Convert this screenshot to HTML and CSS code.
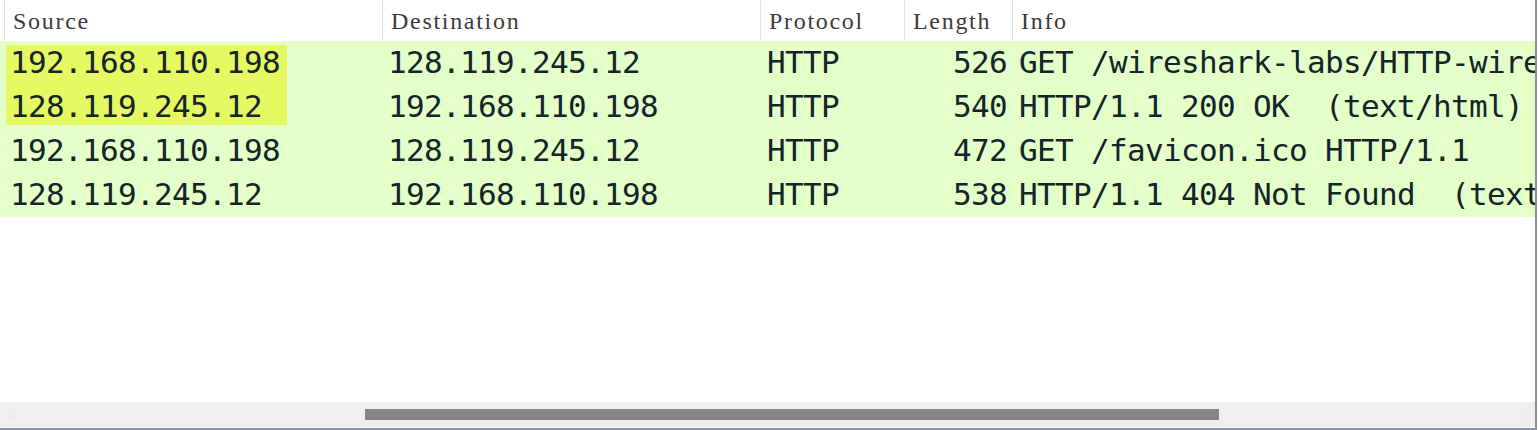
FILE: index.html
```html
<!DOCTYPE html>
<html>
<head>
<meta charset="utf-8">
<link rel="stylesheet" href="styles.css">
</head>
<body>
<div class="frame">
  <div class="grid head">
    <div class="hc first"></div>
    <div class="hc">Source</div>
    <div class="hc">Destination</div>
    <div class="hc">Protocol</div>
    <div class="hc">Length</div>
    <div class="hc">Info</div>
  </div>
  <div class="rows">
    <div class="grid row">
      <div class="c first"></div>
      <div class="c src sel-top">192.168.110.198</div>
      <div class="c dst">128.119.245.12</div>
      <div class="c proto">HTTP</div>
      <div class="c len">526</div>
      <div class="c info">GET /wireshark-labs/HTTP-wireshark-file1.html HTTP/1.1</div>
    </div>
    <div class="grid row">
      <div class="c first"></div>
      <div class="c src sel-bottom">128.119.245.12</div>
      <div class="c dst">192.168.110.198</div>
      <div class="c proto">HTTP</div>
      <div class="c len">540</div>
      <div class="c info">HTTP/1.1 200 OK  (text/html)</div>
    </div>
    <div class="grid row">
      <div class="c first"></div>
      <div class="c src">192.168.110.198</div>
      <div class="c dst">128.119.245.12</div>
      <div class="c proto">HTTP</div>
      <div class="c len">472</div>
      <div class="c info">GET /favicon.ico HTTP/1.1</div>
    </div>
    <div class="grid row">
      <div class="c first"></div>
      <div class="c src">128.119.245.12</div>
      <div class="c dst">192.168.110.198</div>
      <div class="c proto">HTTP</div>
      <div class="c len">538</div>
      <div class="c info">HTTP/1.1 404 Not Found  (text/html)</div>
    </div>
  </div>
  <div class="spacer"></div>
  <div class="scrollbar">
    <div class="sb-btn"></div>
    <div class="sb-area"><div class="thumb"></div></div>
    <div class="sb-btn"></div>
  </div>
</div>
</body>
</html>
```
FILE: styles.css
```css
html, body {
  margin: 0;
  padding: 0;
  background: #ffffff;
}
.frame {
  width: 1535px;
  height: 428px;
  border-right: 2px solid #8e8e8e;
  border-bottom: 2px solid #8a94a6;
  display: flex;
  flex-direction: column;
  overflow: hidden;
  background: #ffffff;
}
.grid {
  display: grid;
  grid-template-columns: 4px 378px 378px 144px 108px 523px;
}
.head {
  height: 41px;
}
.hc {
  font-family: "Liberation Serif", "Times New Roman", serif;
  font-size: 24px;
  letter-spacing: 1.7px;
  line-height: 43px;
  height: 40px;
  color: #3b3b3b;
  padding-left: 8px;
  border-left: 1px solid #e3e3e3;
  white-space: nowrap;
  overflow: hidden;
}
.hc.first {
  padding: 0;
  border-left: none;
}
.rows {
  background: #e4ffc7;
}
.row {
  height: 44px;
}
.c {
  font-family: "DejaVu Sans Mono", "Liberation Mono", monospace;
  font-size: 31px;
  letter-spacing: -0.66px;
  line-height: 43px;
  color: #13242a;
  white-space: pre;
  overflow: hidden;
  padding-left: 6px;
}
.c.first {
  padding: 0;
}
.c.proto {
  padding-left: 7px;
}
.c.len {
  text-align: right;
  padding-left: 0;
  padding-right: 5px;
}
.c.info {
  padding-left: 7px;
}
.sel-top {
  background: linear-gradient(#e6f862, #e6f862) 2px 4px / 281px 40px no-repeat;
}
.sel-bottom {
  background: linear-gradient(#e6f862, #e6f862) 2px 0 / 281px 40px no-repeat;
}
.spacer {
  flex: 1;
}
.scrollbar {
  height: 25px;
  margin-bottom: 1px;
  background: #efefef;
  display: flex;
  align-items: center;
}
.sb-btn {
  width: 10px;
  height: 10px;
  margin: 0 8px;
  background: #ededed;
}
.sb-area {
  flex: 1;
  display: flex;
  align-items: center;
}
.thumb {
  margin-left: 339px;
  width: 854px;
  height: 11px;
  background: #858585;
}
```
